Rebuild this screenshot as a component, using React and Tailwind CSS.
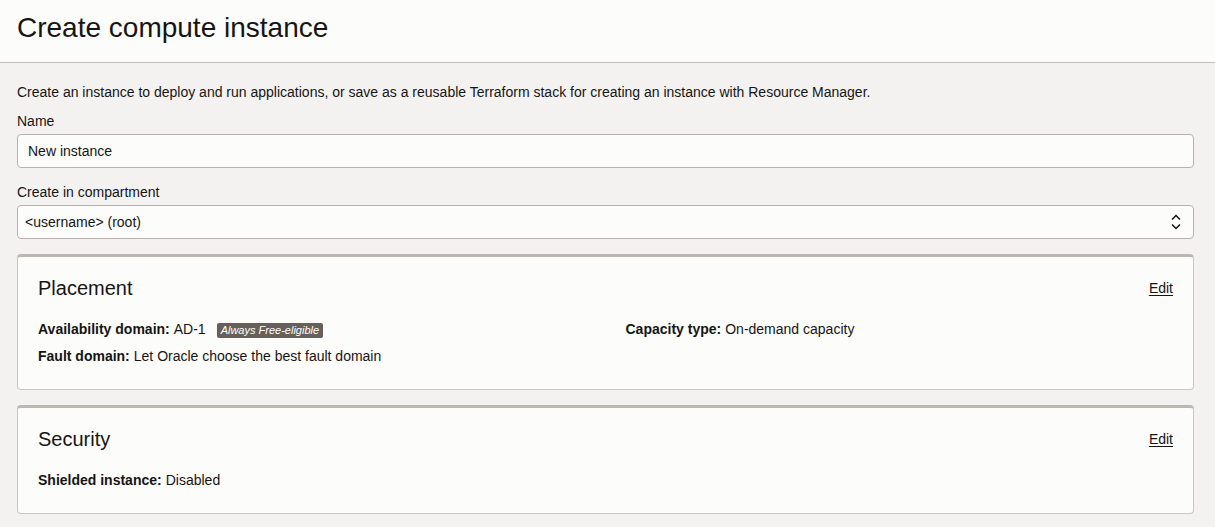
import { useState } from 'react';

function Field({ label, children }) {
  return (
    <div className="flex flex-col">
      <label className="text-[14px] leading-[20px] mb-[3px]">{label}</label>
      {children}
    </div>
  );
}

function Card({ title, children }) {
  return (
    <section className="bg-[#fcfcfb] border border-[#c9c5c0] border-t-[3px] border-t-[#bcb6b0] rounded-[4px] px-[20px] pt-[17px] pb-[19px]">
      <div className="flex items-center justify-between">
        <h2 className="text-[20px] leading-[28px]">{title}</h2>
        <a href="#" className="text-[14px] underline underline-offset-2">Edit</a>
      </div>
      <div className="mt-[14px]">{children}</div>
    </section>
  );
}

function Row({ label, children }) {
  return (
    <div className="text-[14px] leading-[27px] flex items-center">
      <span className="font-bold">{label}</span>
      <span className="ml-[4px]">{children}</span>
    </div>
  );
}

export default function App() {
  const [name, setName] = useState('New instance');

  return (
    <div className="min-h-screen bg-[#f3f2f1] text-[#161513] font-['Liberation_Sans',Arial,sans-serif]">
      {/* Header */}
      <header className="h-[63px] bg-[#fcfcfb] border-b border-[#c4bfb9] flex items-center px-[17px] pb-[6px]">
        <h1 className="text-[28px] leading-none">Create compute instance</h1>
      </header>

      <main className="px-[21px] pl-[17px] pt-[19px]">
        <p className="text-[14px] leading-[20px] mb-[9px]">
          Create an instance to deploy and run applications, or save as a reusable Terraform stack for creating an instance with Resource Manager.
        </p>

        <Field label="Name">
          <input
            value={name}
            onChange={(e) => setName(e.target.value)}
            className="h-[34px] bg-[#fcfcfb] border border-[#b8b2ac] rounded-[4px] px-[10px] text-[14px] outline-none"
          />
        </Field>

        <div className="mt-[14px]">
          <Field label="Create in compartment">
            <div className="h-[34px] bg-[#fcfcfb] border border-[#b8b2ac] rounded-[4px] pl-[7px] pr-[12px] text-[14px] flex items-center justify-between">
              <span>&lt;username&gt; (root)</span>
              <svg width="10" height="16" viewBox="0 0 10 16" fill="none" stroke="#161513" strokeWidth="1.5">
                <path d="M1 5.5 L5 1.5 L9 5.5" />
                <path d="M1 10.5 L5 14.5 L9 10.5" />
              </svg>
            </div>
          </Field>
        </div>

        <div className="mt-[15px] flex flex-col gap-[15px]">
          <Card title="Placement">
            <div className="grid grid-cols-2 gap-x-[40px]">
              <Row label="Availability domain:">
                AD-1
                <span className="ml-[11px] inline-block bg-[#665f5a] text-white italic text-[11px] leading-[15px] px-[4px] rounded-[2px] align-middle">
                  Always Free-eligible
                </span>
              </Row>
              <Row label="Capacity type:">On-demand capacity</Row>
              <Row label="Fault domain:">Let Oracle choose the best fault domain</Row>
            </div>
          </Card>

          <Card title="Security">
            <Row label="Shielded instance:">Disabled</Row>
          </Card>
        </div>
      </main>
    </div>
  );
}
